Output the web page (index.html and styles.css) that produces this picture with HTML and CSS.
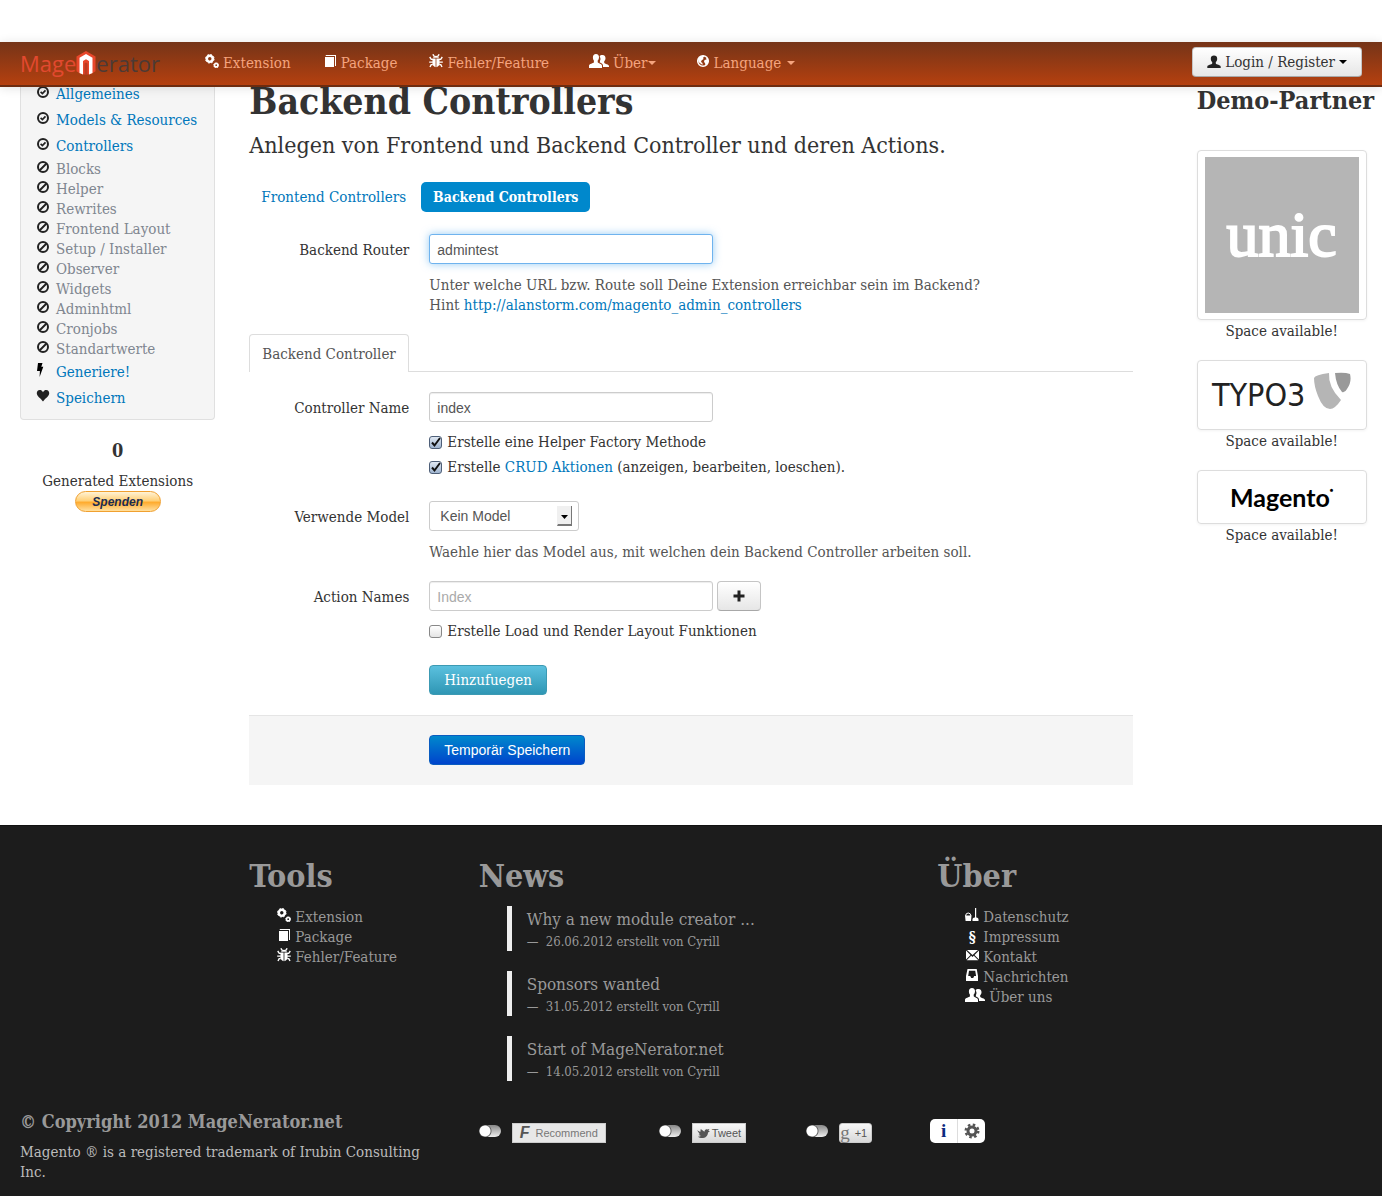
FILE: index.html
```html
<!DOCTYPE html>
<html lang="de">
<head>
<meta charset="utf-8">
<meta name="viewport" content="width=device-width, initial-scale=1">
<title>MageNerator – Backend Controllers</title>
<link rel="stylesheet" href="styles.css">
</head>
<body>
<svg class="sprite" aria-hidden="true">
  <symbol id="i-cogs" viewBox="0 0 14 14">
    <circle cx="4.800" cy="4.800" r="3" fill="none" stroke="currentColor" stroke-width="2.600"/>
    <circle cx="4.800" cy="4.800" r="4.300" fill="none" stroke="currentColor" stroke-width="1" stroke-dasharray="1.800 1.580"/>
    <circle cx="11.200" cy="11.200" r="1.700" fill="none" stroke="currentColor" stroke-width="1.700"/>
    <circle cx="11.200" cy="11.200" r="2.500" fill="none" stroke="currentColor" stroke-width=".8" stroke-dasharray="1.100 .860"/>
  </symbol>
  <symbol id="i-book" viewBox="0 0 14 14">
    <path fill="currentColor" d="M2 3h9v10H2zM3 1h10v11h-1V2H2.500z"/>
  </symbol>
  <symbol id="i-bug" viewBox="0 0 14 14">
    <path fill="currentColor" d="M4 3.800Q4.400 1.700 7 1.700t3 2.100zM3.600 4.500h3v8.700Q3.300 12.400 3.300 8.500zM7.400 4.500h3l.3 4q0 3.900-3.300 4.700z"/>
    <path fill="none" stroke="currentColor" stroke-width="1.400" d="M3.800.3l1.500 2M10.200.3l-1.500 2M.7 3l1.600 2.400H4M13.300 3l-1.600 2.400H10M.2 8.100h3.500M13.800 8.100h-3.500M1 13l1.200-2.400h1.600M13 13l-1.200-2.400h-1.600"/>
  </symbol>
  <symbol id="i-users" viewBox="0 0 20 14">
    <path fill="currentColor" d="M7 0c2 0 3 1.300 3 3.300 0 1.500-.6 2.700-1.300 3.300v1.700c.4 1 4.300 1.500 4.300 3.500V14H0v-2.200c0-2 4.500-2.300 4.900-3.500V6.600C4.300 6 3.900 4.800 3.900 3.300 3.900 1.300 5 0 7 0z"/>
    <path fill="currentColor" d="M10.700 2.700C11 1.300 12 1 13.500 1c2.200 0 3 1.500 3 3.200 0 1.400-.6 2.400-1.300 3v1.500c.5 1.300 4.800 1.500 4.800 3.300V13h-6v-1.500c0-1.500-1.500-2.400-3.200-3 .2-1.200.2-1.500.2-1.800.6-.9.8-2.600-.3-4z"/>
  </symbol>
  <symbol id="i-globe" viewBox="0 0 14 14">
    <circle cx="7" cy="7" r="5.300" fill="none" stroke="currentColor" stroke-width="1.500"/>
    <path fill="currentColor" d="M2 5l2-2.500 4-1 .5 1.500-1.500.5.500 1.500-2 1.500-.5 1.500 1.500 1v2L4.500 9.500 2.500 8zM10 4l2 .5.500 3-1.500 3-1.500 1-.5-2.500-1-1L8.500 6l2-.5z"/>
  </symbol>
  <symbol id="i-user" viewBox="0 0 14 14">
    <path fill="currentColor" d="M7 .5c2 0 3.200 1.200 3.200 3.200 0 1.500-.6 2.600-1.400 3.300v1.500c.5 1.200 4.900 1.200 4.900 3.300V13H.3v-1.200c0-2.100 4.400-2.100 4.900-3.300V7c-.8-.7-1.400-1.800-1.400-3.300 0-2 1.200-3.200 3.200-3.200z"/>
  </symbol>
  <symbol id="i-ok" viewBox="0 0 14 14">
    <circle cx="7" cy="7" r="5" fill="none" stroke="currentColor" stroke-width="2"/>
    <path fill="none" stroke="currentColor" stroke-width="1.700" d="M4.600 6.900l1.800 1.700 3.100-3.200"/>
  </symbol>
  <symbol id="i-ban" viewBox="0 0 14 14">
    <circle cx="7" cy="7" r="5" fill="none" stroke="currentColor" stroke-width="2"/>
    <path stroke="currentColor" stroke-width="2" d="M3.500 10.500l7-7"/>
  </symbol>
  <symbol id="i-bolt" viewBox="0 0 14 14">
    <path fill="#000" d="M2 0h4.500L5.300 3.800h2L3.600 14l.3-6H1z"/>
  </symbol>
  <symbol id="i-heart" viewBox="0 0 14 14">
    <path fill="currentColor" d="M7 3.200C7.800 1.500 9 1 10.200 1c2 0 3.200 1.600 3 3.500-.2 2.700-4 5-6.200 8C4.800 9.500 1 7.200.8 4.500.6 2.600 1.800 1 3.800 1 5 1 6.200 1.500 7 3.200z"/>
  </symbol>
  <symbol id="i-plus" viewBox="0 0 14 14">
    <path stroke="currentColor" stroke-width="3" d="M7 1.500v11M1.500 7h11"/>
  </symbol>
  <symbol id="i-clean" viewBox="0 0 14 14">
    <path fill="currentColor" d="M0 7.500h6.500L6 13H.6zM10 0h1.200v10H10zM7.500 11q.3-1.500 2-1.500h2q1.700 0 2 1.500v2h-6z"/>
    <path fill="none" stroke="currentColor" d="M.6 8Q.6 5 3.200 5t2.700 3"/>
  </symbol>
  <symbol id="i-mail" viewBox="0 0 14 14">
    <path fill="currentColor" d="M2 2h11L7.500 7zM1 2.500l4.500 4.600L1 11.500zM14 2.500v9L9.500 7.100zM1.700 12.300l4.500-4.500 1.300 1.200 1.300-1.200 4.500 4.500z"/>
  </symbol>
  <symbol id="i-inbox" viewBox="0 0 14 14">
    <path fill="currentColor" fill-rule="evenodd" d="M2.500 1h9.200L13 8v5H1V8zM4 2.700L3.200 8h2l1 2h2l1-2h1.900l-.9-5.300z"/>
  </symbol>
  <symbol id="i-gear" viewBox="0 0 16 16">
    <circle cx="8" cy="8" r="4" fill="none" stroke="currentColor" stroke-width="3"/>
    <circle cx="8" cy="8" r="6.300" fill="none" stroke="currentColor" stroke-width="2.400" stroke-dasharray="2.500 2.450"/>
  </symbol>
  <symbol id="i-bird" viewBox="0 0 14 12">
    <path fill="currentColor" d="M0 2.500l3.500 1.800L4 1l4 3.200C8.300 2 9.500 1 11 1.500l2.500-.5-1.200 2L14 3.500l-2 1.300C11.700 9 8.500 11 5.500 11 3.500 11 2 10.500 1 9.500c1.500 0 2.500-.3 3-1L1.500 7.500 3 6.800z"/>
  </symbol>
</svg>

<header class="navbar">
  <a class="brand" href="#" aria-label="MageNerator"><span class="brand-mage">Mage</span><svg class="brand-mark" viewBox="0 0 20 24" aria-hidden="true"><path fill="#e8472b" d="M10 0l9.500 5.400v14.800L16 22.400 10 24l-6-1.600-3.500-2.200V5.400z"/><path fill="#fff" d="M10 3l6.500 3.800V22L13 23.500V10L10 8.200 7 10v13.500L3.500 22V6.800z"/><path fill="#6b2a14" d="M8.500 12.500L10 11.500l1.500 1V24h-3z" opacity=".35"/></svg><span class="brand-erator">erator</span></a>
  <nav class="nav">
    <a href="#"><svg class="icon white"><use href="#i-cogs"/></svg>Extension</a>
    <a href="#"><svg class="icon white"><use href="#i-book"/></svg>Package</a>
    <a href="#"><svg class="icon white"><use href="#i-bug"/></svg>Fehler/Feature</a>
    <a class="dropdown" href="#"><svg class="icon wide white"><use href="#i-users"/></svg>Über<i class="caret"></i></a>
    <a class="dropdown" href="#"><svg class="icon white"><use href="#i-globe"/></svg>Language<i class="caret spaced"></i></a>
  </nav>
  <button class="btn login" type="button"><svg class="icon"><use href="#i-user"/></svg>Login / Register<i class="caret dark"></i></button>
</header>

<div class="page">
  <aside class="side">
    <ul class="well">
      <li class="on"><svg class="icon"><use href="#i-ok"/></svg><a href="#">Allgemeines</a></li>
      <li class="on"><svg class="icon"><use href="#i-ok"/></svg><a href="#">Models &amp; Resources</a></li>
      <li class="on"><svg class="icon"><use href="#i-ok"/></svg><a href="#">Controllers</a></li>
      <li><svg class="icon"><use href="#i-ban"/></svg>Blocks</li>
      <li><svg class="icon"><use href="#i-ban"/></svg>Helper</li>
      <li><svg class="icon"><use href="#i-ban"/></svg>Rewrites</li>
      <li><svg class="icon"><use href="#i-ban"/></svg>Frontend Layout</li>
      <li><svg class="icon"><use href="#i-ban"/></svg>Setup / Installer</li>
      <li><svg class="icon"><use href="#i-ban"/></svg>Observer</li>
      <li><svg class="icon"><use href="#i-ban"/></svg>Widgets</li>
      <li><svg class="icon"><use href="#i-ban"/></svg>Adminhtml</li>
      <li><svg class="icon"><use href="#i-ban"/></svg>Cronjobs</li>
      <li><svg class="icon"><use href="#i-ban"/></svg>Standartwerte</li>
      <li class="on"><svg class="icon"><use href="#i-bolt"/></svg><a href="#">Generiere!</a></li>
      <li class="on"><svg class="icon"><use href="#i-heart"/></svg><a href="#">Speichern</a></li>
    </ul>
    <div class="counter">
      <h3>0</h3>
      <p>Generated Extensions</p>
      <button class="donate" type="button">Spenden</button>
    </div>
  </aside>

  <main class="main">
    <h1>Backend Controllers</h1>
    <p class="lead">Anlegen von Frontend und Backend Controller und deren Actions.</p>
    <nav class="pills">
      <a href="#">Frontend Controllers</a>
      <a class="active" href="#" aria-current="page">Backend Controllers</a>
    </nav>
    <form>
      <div class="row">
        <label class="name" for="router">Backend Router</label>
        <div class="controls">
          <input class="text focused" id="router" type="text" value="admintest">
          <p class="help">Unter welche URL bzw. Route soll Deine Extension erreichbar sein im Backend?<br>Hint <a href="#">http://alanstorm.com/magento_admin_controllers</a></p>
        </div>
      </div>
      <div class="tabs"><a href="#">Backend Controller</a></div>
      <div class="row">
        <label class="name" for="cname">Controller Name</label>
        <div class="controls">
          <input class="text" id="cname" type="text" value="index">
          <div class="checks">
            <label class="check"><input type="checkbox" checked><span>Erstelle eine Helper Factory Methode</span></label>
            <label class="check"><input type="checkbox" checked><span>Erstelle <a href="#">CRUD Aktionen</a> (anzeigen, bearbeiten, loeschen).</span></label>
          </div>
        </div>
      </div>
      <div class="row">
        <label class="name" for="model">Verwende Model</label>
        <div class="controls">
          <select id="model"><option>Kein Model</option></select>
          <p class="help">Waehle hier das Model aus, mit welchen dein Backend Controller arbeiten soll.</p>
        </div>
      </div>
      <div class="row">
        <label class="name" for="action">Action Names</label>
        <div class="controls">
          <div class="inline">
            <input class="text" id="action" type="text" placeholder="Index">
            <button class="btn add" type="button" aria-label="Action hinzufuegen"><svg class="icon"><use href="#i-plus"/></svg></button>
          </div>
          <div class="checks">
            <label class="check"><input type="checkbox"><span>Erstelle Load und Render Layout Funktionen</span></label>
          </div>
        </div>
      </div>
      <div class="row">
        <div class="controls"><button class="btn info" type="button">Hinzufuegen</button></div>
      </div>
      <div class="actions"><button class="btn primary" type="submit">Temporär Speichern</button></div>
    </form>
  </main>

  <aside class="partners">
    <h2>Demo-Partner</h2>
    <ul>
      <li><a class="thumb unic" href="#"><span>unic</span></a><p>Space available!</p></li>
      <li><a class="thumb typo" href="#"><span>TYPO3</span><svg viewBox="0 0 38 38" aria-hidden="true"><path fill="#b5b5b5" d="M1 6Q2 3 16 1q-1 14 12 27-6 9-11 9Q10 37 5 24 1 14 1 6z"/><path fill="#999" d="M22 1q10-1 15 1 2 8-3 15-2 4-5 3Q23 13 22 1z"/></svg></a><p>Space available!</p></li>
      <li><a class="thumb magento" href="#"><span>Magento</span><sup>●</sup></a><p>Space available!</p></li>
    </ul>
  </aside>
</div>

<footer class="footer">
  <div class="grid">
    <section class="tools">
      <h2>Tools</h2>
      <ul>
        <li><svg class="icon white"><use href="#i-cogs"/></svg><a href="#">Extension</a></li>
        <li><svg class="icon white"><use href="#i-book"/></svg><a href="#">Package</a></li>
        <li><svg class="icon white"><use href="#i-bug"/></svg><a href="#">Fehler/Feature</a></li>
      </ul>
    </section>
    <section class="news">
      <h2>News</h2>
      <blockquote><p>Why a new module creator ...</p><small>—&nbsp; 26.06.2012 erstellt von Cyrill</small></blockquote>
      <blockquote><p>Sponsors wanted</p><small>—&nbsp; 31.05.2012 erstellt von Cyrill</small></blockquote>
      <blockquote><p>Start of MageNerator.net</p><small>—&nbsp; 14.05.2012 erstellt von Cyrill</small></blockquote>
    </section>
    <section class="about">
      <h2>Über</h2>
      <ul>
        <li><svg class="icon white"><use href="#i-clean"/></svg><a href="#">Datenschutz</a></li>
        <li><b class="para">§</b><a href="#">Impressum</a></li>
        <li><svg class="icon white"><use href="#i-mail"/></svg><a href="#">Kontakt</a></li>
        <li><svg class="icon white"><use href="#i-inbox"/></svg><a href="#">Nachrichten</a></li>
        <li><svg class="icon wide white"><use href="#i-users"/></svg><a href="#">Über uns</a></li>
      </ul>
    </section>
  </div>
  <div class="grid">
    <div class="copy">
      <h3>© Copyright 2012 MageNerator.net</h3>
      <p>Magento ® is a registered trademark of Irubin Consulting Inc.</p>
    </div>
    <div class="social">
      <div class="share fb"><input class="switch" type="checkbox" aria-label="Facebook"><button type="button"><b>F</b>Recommend</button></div>
      <div class="share tw"><input class="switch" type="checkbox" aria-label="Twitter"><button type="button"><svg viewBox="0 0 14 12"><use href="#i-bird"/></svg>Tweet</button></div>
      <div class="share gp"><input class="switch" type="checkbox" aria-label="Google+"><button type="button"><b>g</b>+1</button></div>
      <div class="settings"><button type="button"><b>i</b></button><button type="button" aria-label="Einstellungen"><svg viewBox="0 0 16 16"><use href="#i-gear"/></svg></button></div>
    </div>
  </div>
</footer>
</body>
</html>
```
FILE: styles.css
```css
* { box-sizing: border-box; }

body {
  margin: 0;
  padding-top: 42px;
  background: #fff;
  color: #333;
  font: 15px/20px "DejaVu Serif Condensed", "DejaVu Serif", serif;
}

h1, h2, h3, p, ul, blockquote { margin: 0; padding: 0; }
ul { list-style: none; }
a { color: #0077bb; text-decoration: none; }
button, input, select { font: 14px/20px "Liberation Sans", Arial, sans-serif; margin: 0; }
.sprite { display: none; }
.icon { width: 14px; height: 14px; flex: none; color: #222; }
.icon.wide { width: 20px; }
.icon.white { color: #fff; }

/* Top bar */
.navbar {
  position: relative;
  z-index: 1;
  display: flex;
  align-items: center;
  height: 45px;
  padding: 0 20px 2px;
  background: linear-gradient(#753418, #b5400f);
  border-bottom: 2px solid #6d2c10;
  box-shadow: 0 1px 10px rgba(0, 0, 0, .12);
}
.brand { display: flex; align-items: center; width: 185px; font: 22px/30px "Open Sans", sans-serif; }
.brand-mage { color: #e2492f; }
.brand-mark { width: 20px; height: 24px; }
.brand-erator { color: #4c3a35; }
.nav { display: flex; gap: 32px; margin-right: auto; }
.nav a { display: flex; align-items: center; color: #f5a47e; }
.nav .dropdown { margin-left: 8px; }
.nav .icon { margin: 0 4px 3px 0; }
.caret { border: 4px solid transparent; border-top-color: currentColor; border-bottom: 0; }
.caret.spaced { margin-left: 6px; }
.caret.dark { color: #000; }

.btn {
  display: flex;
  align-items: center;
  justify-content: center;
  gap: 4px;
  height: 30px;
  padding: 0 14px;
  border: 1px solid #c5c5c5;
  border-bottom-color: #a8a8a8;
  border-radius: 4px;
  background: linear-gradient(#fff, #e6e6e6);
  color: #333;
}
.login { margin-top: -2px; font: 15px/20px "DejaVu Serif Condensed", "DejaVu Serif", serif; white-space: nowrap; }

/* Page columns */
.page, .grid {
  display: grid;
  grid-template-columns: repeat(12, minmax(0, 1fr));
  column-gap: 34px;
  padding: 0 20px;
}
.page { margin-top: -6px; }
.side, .partners { grid-column: span 2; }
.main { grid-column: span 8; }

.well {
  padding: 0 15px 8px;
  border: 1px solid #e0e0e0;
  border-top: 0;
  border-radius: 0 0 4px 4px;
  background: #f5f5f5;
}
.well li { display: flex; gap: 6px; color: #7f8690; white-space: nowrap; }
.well .on { padding: 3px 0; }
.well .icon { margin-top: 1px; }
.counter { display: flex; flex-direction: column; align-items: center; margin-top: 11px; }
.counter h3 { font-size: 18px; line-height: 40px; }
.donate {
  width: 86px;
  height: 21px;
  padding: 0;
  border: 1px solid #f0a030;
  border-radius: 11px;
  background: linear-gradient(#fff3d6, #ffd078 45%, #ffac2f 55%, #ffe0a0);
  color: #1c2c50;
  font: italic bold 12px/18px "Liberation Sans", Arial, sans-serif;
}

h1 { font-size: 37px; line-height: 40px; }
.lead { margin-top: 9px; font-size: 23px; line-height: 30px; }
.pills { display: flex; gap: 3px; margin-top: 22px; }
.pills a { padding: 5px 12px; border-radius: 5px; }
.pills .active { background: #0088cc; color: #fff; font-size: 14px; font-weight: bold; }

.row { display: flex; margin-top: 19px; }
.pills + form > .row:first-child { margin-top: 22px; }
.name { width: 160px; margin-right: 20px; padding-top: 6px; text-align: right; }
.row > .controls:first-child { margin-left: 180px; }
.text {
  display: block;
  width: 284px;
  height: 30px;
  padding: 5px 7px 3px;
  border: 1px solid #ccc;
  border-radius: 3px;
  background: #fff;
  color: #555;
  box-shadow: inset 0 1px 1px rgba(0, 0, 0, .075);
}
.text::placeholder { color: #aaa; }
.focused { border-color: #6fb3ee; box-shadow: 0 0 8px rgba(82, 168, 236, .6); outline: 0; }
.help { margin-top: 11px; color: #555; }
.tabs { display: flex; height: 38px; margin: 19px 0 20px; border-bottom: 1px solid #ddd; }
.tabs + .row { margin-top: 0; }
.tabs a {
  height: 38px;
  padding: 9px 12px;
  border: 1px solid #ddd;
  border-bottom: 0;
  border-radius: 4px 4px 0 0;
  background: #fff;
  color: #555;
}
.checks { display: grid; gap: 5px; margin: 10px 0 5px; }
.check { display: flex; align-items: center; gap: 5px; }
.check input {
  appearance: none;
  width: 13px;
  height: 13px;
  border: 1px solid #888;
  border-radius: 3px;
  background: linear-gradient(#fff, #e4e4e4);
}
.check input:checked {
  border-color: #4e5f78;
  background: url("data:image/svg+xml,%3Csvg xmlns='http://www.w3.org/2000/svg' viewBox='0 0 11 11'%3E%3Cpath d='M2 5.500l2.500 3L10 1' fill='none' stroke='%23111' stroke-width='2'/%3E%3C/svg%3E"), linear-gradient(#e0e8f2, #9fb4cf);
}
select {
  appearance: none;
  display: block;
  width: 150px;
  height: 30px;
  padding: 4px 10px;
  border: 1px solid #ccc;
  border-radius: 3px;
  color: #555;
  background: #fff url("data:image/svg+xml,%3Csvg xmlns='http://www.w3.org/2000/svg' width='15' height='20'%3E%3Cpath fill='%23f0f0f0' d='M0 0h15v20H0z'/%3E%3Cpath fill='%23777' d='M14 0h1v20H0l1-2h13z'/%3E%3Cpath d='M4 9h7l-3.500 4z'/%3E%3C/svg%3E") no-repeat right 6px center;
}
.inline { display: flex; gap: 4px; }
.add { width: 44px; }
.info {
  border-color: #3c9ab3;
  background: linear-gradient(#5bc0de, #2f96b4);
  color: #fff;
  font: 15px/20px "DejaVu Serif Condensed", "DejaVu Serif", serif;
}
.primary { border-color: #0a5cc0; background: linear-gradient(#0088cc, #0044cc); color: #fff; }
.actions { margin-top: 20px; padding: 19px 0 20px 180px; border-top: 1px solid #e5e5e5; background: #f5f5f5; }

/* Partners */
.partners { padding-left: 30px; }
.partners h2 { font-size: 25px; line-height: 40px; white-space: nowrap; }
.partners ul { display: grid; gap: 19px; margin-top: 29px; }
.partners li { width: 170px; text-align: center; }
.thumb {
  display: flex;
  align-items: center;
  justify-content: center;
  margin-bottom: 1px;
  padding: 6px 7px;
  border: 1px solid #ddd;
  border-radius: 4px;
  box-shadow: 0 1px 3px rgba(0, 0, 0, .05);
}
.unic { height: 170px; }
.unic span { flex: 1; height: 156px; background: #b5b5b5; color: #fff; font: 64px/156px "Liberation Serif", serif; -webkit-text-stroke: 2px #fff; }
.typo { height: 70px; gap: 8px; color: #222; font: 32px/40px "DejaVu Sans Condensed", "Open Sans", sans-serif; }
.typo svg { width: 38px; height: 38px; margin-bottom: 8px; }
.magento { height: 54px; color: #000; font: bold 25px/40px Lato, sans-serif; }
.magento sup { align-self: flex-start; font-size: 6px; line-height: 26px; }

/* Footer */
.footer {
  margin-top: 40px;
  padding: 30px 0 15px;
  border-top: 1px solid #111;
  background: #1c1c1c;
  color: #999;
}
.footer a { color: #999; }
.footer h2 { font-size: 32px; line-height: 40px; }
.tools { grid-column: 3 / span 2; }
.news, .about { grid-column-end: span 4; }
.footer ul { margin: 11px 0 0 28px; }
.footer li { display: flex; gap: 4px; }
.footer .icon { margin-top: 1px; }
.para { width: 14px; color: #fff; text-align: center; }
blockquote { margin: 10px 0 20px 28px; padding-left: 15px; border-left: 5px solid #eee; }
blockquote + blockquote { margin-top: 0; }
blockquote p { font-size: 17px; line-height: 26px; }
blockquote small { display: block; font-size: 13px; line-height: 19px; }
.copy { grid-column: span 4; color: #bbb; }
.copy h3 { color: #999; font-size: 18px; line-height: 41px; }
.social { grid-column: span 8; display: flex; align-items: flex-start; padding-top: 18px; }
.share { display: flex; gap: 11px; padding-top: 4px; }
.fb { margin-right: 53px; }
.tw { margin-right: 60px; }
.gp { margin-right: 58px; }
.switch {
  appearance: none;
  width: 22px;
  height: 12px;
  margin-top: 2px;
  border-radius: 6px;
  background: radial-gradient(circle at 6px 6px, #fff 5px, #666 6px, transparent 7px), linear-gradient(#888, #eee);
}
.share button {
  display: flex;
  align-items: center;
  height: 20px;
  padding: 0 5px;
  border: 1px solid #ccc;
  background: linear-gradient(#f8f8f8, #d8d8d8);
  color: #555;
  font-size: 11px;
}
.fb button { gap: 6px; padding: 0 7px; background: #e8e8e8; color: #777; }
.fb b { font: italic bold 16px/18px "Liberation Sans", sans-serif; color: #555; }
.tw button { gap: 2px; padding: 0 4px; }
.tw svg { width: 13px; height: 11px; }
.gp button { gap: 5px; padding: 0 4px 0 0; border-radius: 3px; }
.gp b { font: 19px/18px "Liberation Serif", serif; color: #777; }
.settings { display: flex; height: 24px; border-radius: 5px; background: #fff; }
.settings button { display: flex; align-items: center; justify-content: center; width: 27px; padding: 0; border: 0; background: none; }
.settings button + button { width: 28px; border-left: 1px solid #ddd; }
.settings b { font: bold 19px/24px "Liberation Serif", serif; color: #0b2a80; }
.settings svg { width: 16px; height: 16px; color: #555; }
```
